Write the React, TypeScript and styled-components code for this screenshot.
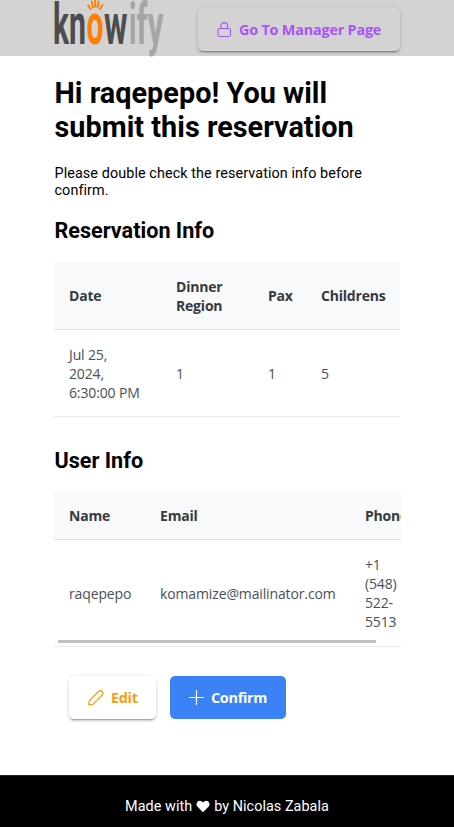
import React from "react";
import styled, { createGlobalStyle } from "styled-components";

const GlobalStyle = createGlobalStyle`
  * { box-sizing: border-box; }
  body { margin: 0; background: #fff; color: #000; font-family: Roboto, sans-serif; font-size: 14.4px; }
  h1, h2, p { margin: 0; }
`;

const Page = styled.div`
  display: flex;
  flex-direction: column;
  height: 827px;
  overflow: hidden;
`;

const Header = styled.header`
  display: flex;
  justify-content: space-between;
  flex: none;
  height: 56px;
  padding: 0 54px;
  background: #d3d3d3;
`;

const Logo = styled.svg`
  display: block;
  width: 110px;
  height: 57px;
  overflow: hidden;
  font-family: Roboto, sans-serif;
  font-weight: 700;
`;

const Button = styled.button<{ $tone: string; $width: number; $filled?: boolean; $top?: number }>`
  display: flex;
  align-items: center;
  width: ${(p) => p.$width}px;
  height: 43px;
  margin: ${(p) => p.$top ?? 0}px 0 0;
  padding: 0 0 0 19px;
  gap: 7px;
  border: 0;
  border-radius: 5px;
  font: 700 14.4px/20px "Open Sans", sans-serif;
  white-space: nowrap;
  color: ${(p) => (p.$filled ? "#fff" : p.$tone)};
  background: ${(p) => (p.$filled ? p.$tone : "transparent")};
  box-shadow: ${(p) =>
    p.$filled
      ? "none"
      : "0 3px 1px -2px rgba(0,0,0,.2), 0 2px 2px rgba(0,0,0,.14), 0 1px 5px rgba(0,0,0,.12)"};
  svg { flex: none; }
`;

const Label = styled.span<{ $spacing: number }>`
  letter-spacing: ${(p) => p.$spacing}px;
`;

const Main = styled.main`
  flex: 1;
  width: 347px;
  margin-left: 54px;
`;

const Title = styled.h1`
  margin-top: 20px;
  padding-left: 0.5px;
  font-size: 28.8px;
  line-height: 34px;
  font-weight: 700;
  letter-spacing: 0.03px;
  white-space: nowrap;
`;

const Intro = styled.p`
  margin-top: 21px;
  padding-left: 0.5px;
  line-height: 17px;
  font-weight: 400;
  letter-spacing: 0.08px;
`;

const Section = styled.h2<{ $top: number }>`
  margin-top: ${(p) => p.$top}px;
  padding-left: 0.5px;
  font-size: 21.6px;
  line-height: 25px;
  font-weight: 700;
`;

const TableFrame = styled.div<{ $top: number }>`
  position: relative;
  margin-top: ${(p) => p.$top}px;
  overflow: hidden;
`;

const Table = styled.table<{ $width: number }>`
  width: ${(p) => p.$width}px;
  table-layout: fixed;
  border-collapse: separate;
  border-spacing: 0;
  font-family: "Open Sans", sans-serif;
  font-size: 14px;
  line-height: 19px;
`;

const Row = styled.tr<{ $height: number }>`
  height: ${(p) => p.$height}px;
`;

const Head = styled.th`
  padding: 0 0 0 15px;
  text-align: left;
  font-weight: 700;
  letter-spacing: -0.2px;
  color: #343a40;
  background: #f8f9fa;
  border-bottom: 1px solid #dee2e6;
  white-space: nowrap;
`;

const Cell = styled.td`
  padding: 0 0 0 15px;
  font-weight: 400;
  letter-spacing: -0.13px;
  color: #495057;
  border-bottom: 1px solid #e9ecef;
  white-space: nowrap;
`;

const Scrollbar = styled.div`
  position: absolute;
  left: 4px;
  bottom: 4px;
  width: 318px;
  height: 3px;
  background: #c1c1c1;
`;

const Actions = styled.div`
  display: flex;
  gap: 14px;
  margin: 29px 0 0 15px;
`;

const Footer = styled.footer`
  display: flex;
  align-items: center;
  justify-content: center;
  flex: none;
  gap: 4px;
  height: 52px;
  padding-top: 9px;
  color: #fff;
  background: #000;
  border-top: 1px solid #222;
  font-size: 14.4px;
  letter-spacing: 0.05px;
`;

const LockIcon = () => (
  <svg width="15" height="16" viewBox="0 0 15 16" fill="none" stroke="currentColor" strokeWidth="1.1">
    <rect x="1" y="6.5" width="12.5" height="8" rx="1.8" />
    <path d="M3.8 6.5V4a3.4 3.4 0 0 1 6.8 0V6.5" />
  </svg>
);

const PencilIcon = () => (
  <svg width="16" height="16" viewBox="0 0 16 16" fill="none" stroke="currentColor" strokeWidth="1.25" strokeLinejoin="round">
    <path d="M.8 15l.5-4.2 9.2-9.3a2.5 2.5 0 0 1 3.7 3.6l-9.3 9.3z" />
  </svg>
);

const PlusIcon = () => (
  <svg width="15" height="16" viewBox="0 0 15 16" fill="none" stroke="currentColor" strokeWidth="1.2" strokeLinecap="round">
    <path d="M7.5 .5v14M.5 7.5h14" />
  </svg>
);

const HeartIcon = () => (
  <svg width="14" height="13" viewBox="0 0 14 13" fill="#fff">
    <path d="M7 12.2L1.3 6.4C-1.4 3.5 2.8-1.2 6.1 1.7L7 2.6l.9-.9c3.3-2.9 7.5 1.8 4.8 4.7z" />
  </svg>
);

const letters = [
  { char: "k", x: -1, width: 16, fill: "#4d4d4f" },
  { char: "n", x: 15, width: 17, fill: "#4d4d4f" },
  { char: "o", x: 32.5, width: 17, fill: "#ff7f00" },
  { char: "w", x: 50, width: 23.5, fill: "#4d4d4f" },
  { char: "i", x: 75, width: 7.5, fill: "#a5a5a5" },
  { char: "f", x: 82.5, width: 11, fill: "#a5a5a5" },
  { char: "y", x: 93.5, width: 16, fill: "#a5a5a5" },
];

const KnowifyLogo = () => (
  <Logo viewBox="0 0 110 57" aria-label="knowify">
    {letters.map((l) => (
      <text key={l.char} x={l.x} y="43.5" fontSize="58" fill={l.fill} textLength={l.width} lengthAdjust="spacingAndGlyphs">
        {l.char}
      </text>
    ))}
    <path d="M33.6 4.5l3.3 5.3M37.5 .8l1.6 7.4M41.2 0v7.5M44.9 .8l-1.5 7.4M48.8 4.5l-3.2 5.3" stroke="#ff7f00" strokeWidth="1.9" />
  </Logo>
);

export default function App() {
  return (
    <Page>
      <GlobalStyle />
      <Header>
        <KnowifyLogo />
        <Button $tone="#a855f7" $width={202} $top={8}>
          <LockIcon />
          <Label $spacing={-0.2}>Go To Manager Page</Label>
        </Button>
      </Header>
      <Main>
        <Title>Hi raqepepo! You will<br />submit this reservation</Title>
        <Intro>Please double check the reservation info before<br />confirm.</Intro>
        <Section $top={19}>Reservation Info</Section>
        <TableFrame $top={19}>
          <Table $width={346}>
            <colgroup>
              <col width="107" /><col width="92" /><col width="53" /><col width="94" />
            </colgroup>
            <thead>
              <Row $height={68}>
                <Head>Date</Head><Head>Dinner<br />Region</Head><Head>Pax</Head><Head>Childrens</Head>
              </Row>
            </thead>
            <tbody>
              <Row $height={87}>
                <Cell>Jul 25,<br />2024,<br />6:30:00 PM</Cell><Cell>1</Cell><Cell>1</Cell><Cell>5</Cell>
              </Row>
            </tbody>
          </Table>
        </TableFrame>
        <Section $top={31}>User Info</Section>
        <TableFrame $top={18}>
          <Table $width={410}>
            <colgroup>
              <col width="91" /><col width="205" /><col width="114" />
            </colgroup>
            <thead>
              <Row $height={49}>
                <Head>Name</Head><Head>Email</Head><Head>Phone</Head>
              </Row>
            </thead>
            <tbody>
              <Row $height={107}>
                <Cell>raqepepo</Cell><Cell>komamize@mailinator.com</Cell><Cell>+1<br />(548)<br />522-<br />5513</Cell>
              </Row>
            </tbody>
          </Table>
          <Scrollbar />
        </TableFrame>
        <Actions>
          <Button $tone="#f59e0b" $width={87}>
            <PencilIcon />
            <Label $spacing={-0.3}>Edit</Label>
          </Button>
          <Button $tone="#3b82f6" $width={116} $filled>
            <PlusIcon />
            <Label $spacing={-0.3}>Confirm</Label>
          </Button>
        </Actions>
      </Main>
      <Footer>
        <span>Made with</span><HeartIcon /><span>by Nicolas Zabala</span>
      </Footer>
    </Page>
  );
}
